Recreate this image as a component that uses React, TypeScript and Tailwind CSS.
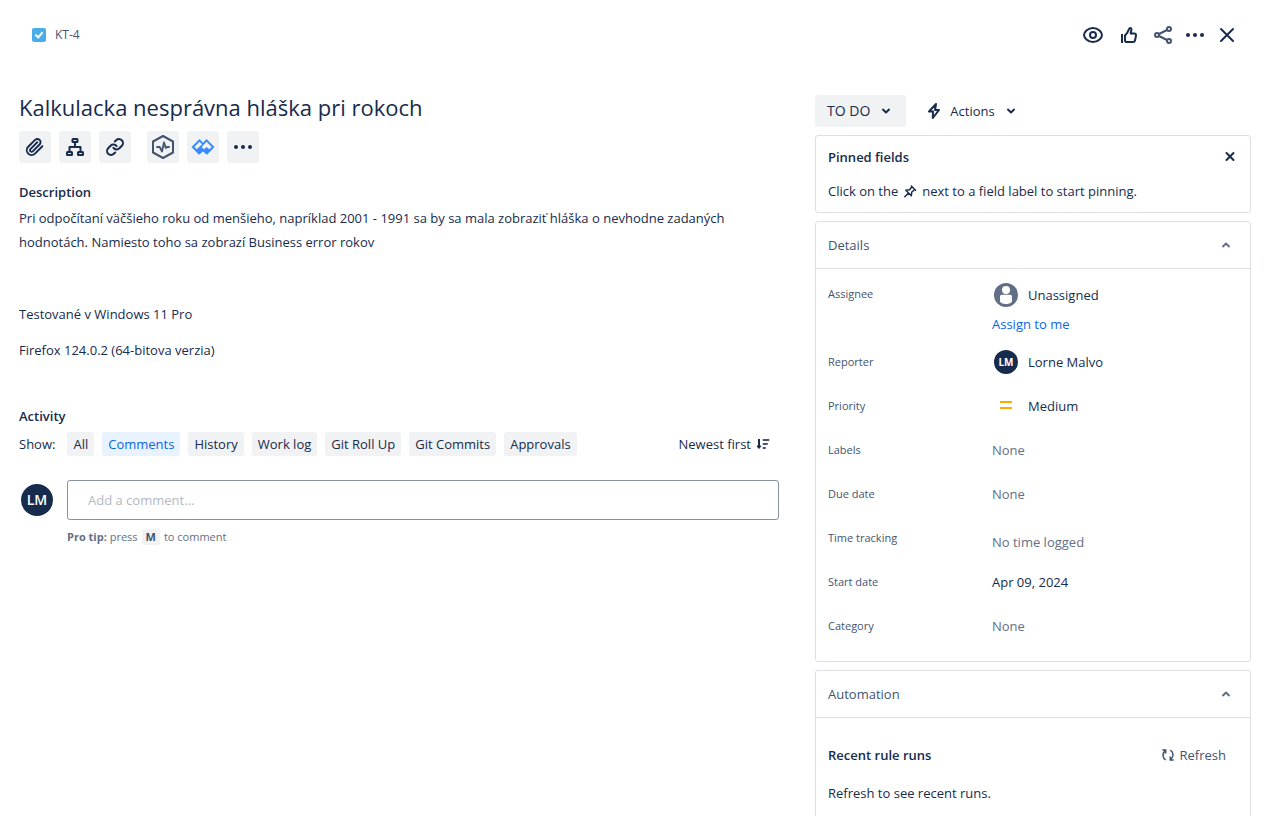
import type { ReactNode } from "react";

type IconProps = { children: ReactNode; size?: string; color?: string };

function Icon({ children, size = "size-6", color = "text-[#172b4d]" }: IconProps) {
  return (
    <svg
      viewBox="0 0 24 24"
      className={`${size} ${color} block shrink-0`}
      fill="none"
      stroke="currentColor"
      strokeWidth="2"
      strokeLinecap="round"
      strokeLinejoin="round"
      aria-hidden="true"
    >
      {children}
    </svg>
  );
}

const Dots = () => (
  <Icon>
    <g fill="currentColor" stroke="none">
      <circle cx="5" cy="12" r="2" />
      <circle cx="12" cy="12" r="2" />
      <circle cx="19" cy="12" r="2" />
    </g>
  </Icon>
);

const Chevron = ({ up = false }: { up?: boolean }) => (
  <Icon color={up ? "text-[#626f86]" : "text-[#172b4d]"}>
    <path d={up ? "M9 13.4l3-2.8 3 2.8" : "M9 10.6l3 2.8 3-2.8"} />
  </Icon>
);

function HeaderActions() {
  const wide = "flex h-8 w-8 items-center justify-center rounded-[3px]";
  const narrow = "flex h-8 w-7 items-center justify-center rounded-[3px]";
  return (
    <div className="flex items-center gap-1">
      <button className={wide} aria-label="Watch">
        <Icon>
          <path d="M12 5C6.600 5 3 9.600 3 12s3.600 7 9 7 9-4.600 9-7-3.600-7-9-7z" />
          <circle cx="12" cy="12" r="3" />
        </Icon>
      </button>
      <button className={wide} aria-label="Vote">
        <Icon>
          <path d="M5 11v9" strokeLinecap="butt" />
          <path d="M8 12.500v4.700c0 1.200.800 1.900 2 1.900h6c1 0 1.800-.6 2-1.600l1-4.900c.2-1.200-.5-2.100-1.700-2.100h-3.600l.7-3.800c.2-1-.4-1.700-1.200-1.600-.5 0-.9.400-1.100.9L10 10.200z" />
        </Icon>
      </button>
      <button className={narrow} aria-label="Share">
        <Icon color="text-[#44546f]">
          <circle cx="6" cy="12" r="2" />
          <circle cx="18" cy="6" r="2" />
          <circle cx="18" cy="18" r="2" />
          <path d="M8 11l8-4M8 13l8 4" />
        </Icon>
      </button>
      <button className={narrow} aria-label="More">
        <Dots />
      </button>
      <button className={narrow} aria-label="Close">
        <Icon>
          <path d="M6 6l12 12M18 6L6 18" />
        </Icon>
      </button>
    </div>
  );
}

function ToolButton({ label, children }: { label: string; children: ReactNode }) {
  return (
    <button aria-label={label} className="flex size-8 items-center justify-center rounded-[3px] bg-[#f1f2f4]">
      {children}
    </button>
  );
}

function Toolbar() {
  return (
    <div className="mt-2.5 flex gap-2">
      <ToolButton label="Attach">
        <Icon>
          <path
            d="M21.440 11.050l-9.190 9.190a6 6 0 0 1-8.490-8.490l8.570-8.570A4 4 0 1 1 18 8.840l-8.590 8.570a2 2 0 0 1-2.830-2.830l8.490-8.480"
            transform="translate(2.200 2.400) scale(.8)"
            strokeWidth="2.400"
          />
        </Icon>
      </ToolButton>
      <ToolButton label="Add a child issue">
        <Icon>
          <rect x="9.500" y="4" width="5" height="3" rx=".5" />
          <rect x="4" y="17" width="5" height="3" rx=".5" />
          <rect x="15" y="17" width="5" height="3" rx=".5" />
          <path d="M12 7v5M6.500 16v-4h11v4" />
        </Icon>
      </ToolButton>
      <ToolButton label="Link issue">
        <Icon>
          <g transform="translate(2.400 2.400) scale(.8)" strokeWidth="2.500">
            <path d="M10 13a5 5 0 0 0 7.540.540l3-3a5 5 0 0 0-7.070-7.070l-1.720 1.710" />
            <path d="M14 11a5 5 0 0 0-7.540-.540l-3 3a5 5 0 0 0 7.070 7.070l1.710-1.710" />
          </g>
        </Icon>
      </ToolButton>
      <div className="ml-2 flex gap-2">
        <ToolButton label="Monitoring">
          <Icon color="text-[#44546f]">
            <path d="M12 1l10 5.500v11L12 23 2 17.500v-11z" strokeWidth="2" />
            <path d="M6 12h2.700l2.300 4.500 2-9 1.800 5.500 1-1H18" strokeWidth="1.800" />
          </Icon>
        </ToolButton>
        <ToolButton label="Diagrams">
          <svg viewBox="0 0 24 24" className="block size-6" aria-hidden="true">
            <path d="M8.500 4l3.500 3.500L15.500 4l8 8-7.500 7.700-4-3.200-4 3.200L.5 12z" fill="#388bff" />
            <path d="M8.500 6.800L3.300 12l2.500 2.300L11 9.200zM15.500 6.800L10.600 12l2.400 2.300 2.600-2.400 2.800 2.300L20.700 12zM12 7.500l1-1-1-2.500-1 2.500z" fill="#f1f2f4" />
          </svg>
        </ToolButton>
        <ToolButton label="More actions">
          <Dots />
        </ToolButton>
      </div>
    </div>
  );
}

const filters = ["All", "Comments", "History", "Work log", "Git Roll Up", "Git Commits", "Approvals"];

function Activity() {
  return (
    <section className="mt-11">
      <h2 className="font-semibold">Activity</h2>
      <div className="mt-1.5 flex h-6 items-center justify-between">
        <div className="flex items-center gap-2">
          <span className="mr-1">Show:</span>
          {filters.map((name) => (
            <button
              key={name}
              className={`h-6 rounded-[3px] px-1.5 whitespace-nowrap ${
                name === "Comments" ? "bg-[#e9f2ff] text-[#0c66e4]" : "bg-[#f1f2f4]"
              }`}
            >
              {name}
            </button>
          ))}
        </div>
        <button className="mr-2 flex items-center gap-1 whitespace-nowrap">
          Newest first
          <svg viewBox="0 0 16 16" className="block size-4 text-[#172b4d]" fill="none" stroke="currentColor" aria-hidden="true">
            <path d="M4 3v9" strokeWidth="2" />
            <path d="M2 10l2 2.500L6 10z" fill="currentColor" strokeWidth="1" strokeLinejoin="round" />
            <path d="M8.500 4h5M8.500 8h3.500M8.500 12h1.500" stroke="#44546f" strokeWidth="2" strokeLinecap="round" />
          </svg>
        </button>
      </div>
      <div className="mt-6 flex">
        <span className="mt-1 ml-0.5 flex size-8 shrink-0 items-center justify-center rounded-full bg-[#172b4d] text-[14px] font-semibold text-white">
          LM
        </span>
        <div className="ml-3.5 flex-1">
          <input
            aria-label="Add a comment"
            placeholder="Add a comment…"
            className="block h-10 w-full rounded-[3px] border border-[#8590a2] px-5 placeholder:text-[#b3b9c4]"
          />
          <p className="mt-[9px] flex items-center gap-1 text-[11px] leading-4 text-[#626f86]">
            <span>
              <b>Pro tip:</b> press
            </span>
            <kbd className="rounded-[3px] bg-[#f1f2f4] px-1 font-[inherit] font-bold text-[#44546f]">M</kbd>
            <span>to comment</span>
          </p>
        </div>
      </div>
    </section>
  );
}

function Panel({ title, children }: { title: string; children: ReactNode }) {
  return (
    <section className="mt-2 rounded-[3px] border border-[#dcdfe4]">
      <button className="flex h-[47px] w-full items-center justify-between border-b border-[#dcdfe4] px-3 text-[#44546f]">
        <span>{title}</span>
        <Chevron up />
      </button>
      {children}
    </section>
  );
}

function Field({ label, children, muted = false }: { label: string; children: ReactNode; muted?: boolean }) {
  return (
    <div className="flex min-h-11 px-3">
      <dt className="w-[164px] shrink-0 pt-3.5 text-[11px] leading-4 text-[#44546f]">{label}</dt>
      <dd className={`flex-1 pt-3 ${muted ? "text-[#626f86]" : ""}`}>{children}</dd>
    </div>
  );
}

function WithIcon({ icon, children }: { icon: ReactNode; children: ReactNode }) {
  return (
    <div className="flex h-5 items-center gap-2.5 pl-0.5">
      <span className="flex size-6 shrink-0 items-center justify-center">{icon}</span>
      <span>{children}</span>
    </div>
  );
}

export default function App() {
  return (
    <div className="h-screen overflow-hidden bg-white font-['Open_Sans','Noto_Sans',sans-serif] text-[13px] leading-5 text-[#172b4d]">
      <header className="flex h-[70px] items-center justify-between pr-[27px] pl-[31px]">
        <a href="#KT-4" className="flex items-center gap-2 text-[12px] leading-4 text-[#44546f]">
          <svg viewBox="0 0 16 16" className="block size-4" aria-hidden="true">
            <rect x="1" y="1" width="14" height="14" rx="2" fill="#4bade8" />
            <path d="M5 8.300l2.200 2.200L11 5.800" fill="none" stroke="#fff" strokeWidth="2" strokeLinecap="round" strokeLinejoin="round" />
          </svg>
          KT-4
        </a>
        <HeaderActions />
      </header>

      <div className="flex items-start gap-9 pr-[17px] pl-[19px]">
        <main className="min-w-0 flex-1 pt-[23px]">
          <h1 className="text-[22px] leading-7">Kalkulacka nesprávna hláška pri rokoch</h1>
          <Toolbar />
          <section className="mt-[19px]">
            <h2 className="font-semibold">Description</h2>
            <div className="mt-1 space-y-3 leading-6">
              <p>
                Pri odpočítaní väčšieho roku od menšieho, napríklad 2001 - 1991 sa by sa mala zobraziť hláška o nevhodne
                zadaných
                <br />
                hodnotách. Namiesto toho sa zobrazí Business error rokov
              </p>
              <p className="h-6" />
              <p>Testované v Windows 11 Pro</p>
              <p>Firefox 124.0.2 (64-bitova verzia)</p>
            </div>
          </section>
          <Activity />
        </main>

        <aside className="w-[436px] shrink-0 pt-[25px]">
          <div className="flex h-8 items-center gap-4">
            <button className="flex h-8 items-center gap-1 rounded-[3px] bg-[#f1f2f4] pr-2 pl-3 text-[14px] font-medium">
              TO DO
              <Chevron />
            </button>
            <button className="flex h-8 items-center gap-1">
              <Icon>
                <path d="M14 5L7 12.500h4L10.800 19l6.200-8h-4z" />
              </Icon>
              Actions
              <Chevron />
            </button>
          </div>

          <section className="mt-2 rounded-[3px] border border-[#dcdfe4] px-3 pt-[11px] pb-[11px]">
            <div className="flex items-center justify-between">
              <h2 className="font-semibold">Pinned fields</h2>
              <button aria-label="Dismiss" className="-mr-1 flex h-5 items-center">
                <Icon>
                  <path d="M8.500 8l7 7M15.500 8l-7 7" />
                </Icon>
              </button>
            </div>
            <p className="mt-3.5 flex items-center gap-1">
              Click on the
              <svg viewBox="0 0 16 16" className="block size-4" fill="none" stroke="currentColor" strokeWidth="1.500" strokeLinecap="round" strokeLinejoin="round" aria-hidden="true">
                <path d="M9.300 3l4.200 4.200M10 3.700L7.500 6.700 3.800 7.200l5.500 5.500.5-3.700 3-2.500M6.300 10.200L2.800 13.700" />
              </svg>
              next to a field label to start pinning.
            </p>
          </section>

          <Panel title="Details">
            <dl className="pt-[3px] pb-[13px]">
              <div className="flex min-h-[68px] px-3">
                <dt className="w-[164px] shrink-0 pt-3.5 text-[11px] leading-4 text-[#44546f]">Assignee</dt>
                <dd className="flex-1 pt-[13px]">
                  <WithIcon
                    icon={
                      <svg viewBox="0 0 24 24" className="block size-6" aria-hidden="true">
                        <circle cx="12" cy="12" r="12" fill="#626f86" />
                        <circle cx="12" cy="7" r="4" fill="#fff" />
                        <path d="M6 13.500c0-1 .8-1.700 1.800-1.700h8.400c1 0 1.800.7 1.800 1.700V18c0 1.800-3 3-6 3s-6-1.200-6-3z" fill="#fff" />
                      </svg>
                    }
                  >
                    Unassigned
                  </WithIcon>
                  <button className="mt-[9px] block text-[#0c66e4]">Assign to me</button>
                </dd>
              </div>
              <Field label="Reporter">
                <WithIcon
                  icon={
                    <span className="flex size-6 items-center justify-center rounded-full bg-[#172b4d] text-[10px] font-bold text-white">
                      LM
                    </span>
                  }
                >
                  Lorne Malvo
                </WithIcon>
              </Field>
              <Field label="Priority">
                <WithIcon
                  icon={
                    <svg viewBox="0 0 16 16" className="block size-4" aria-hidden="true">
                      <path d="M2 3h12v2H2zM2 9h12v2H2z" fill="#ffab00" />
                    </svg>
                  }
                >
                  Medium
                </WithIcon>
              </Field>
              <Field label="Labels" muted>None</Field>
              <Field label="Due date" muted>None</Field>
              <Field label="Time tracking" muted>
                <span className="block pt-1">No time logged</span>
              </Field>
              <Field label="Start date">Apr 09, 2024</Field>
              <Field label="Category" muted>None</Field>
            </dl>
          </Panel>

          <Panel title="Automation">
            <div className="px-3 pt-[27px] pb-6">
              <div className="flex items-center justify-between pr-3">
                <h2 className="font-semibold">Recent rule runs</h2>
                <button className="flex items-center gap-1 text-[#44546f]">
                  <svg viewBox="0 0 16 16" className="block size-4" fill="none" stroke="currentColor" strokeWidth="1.500" aria-hidden="true">
                    <path d="M5.700 12.800C2.500 11 2 6.500 5.200 3.600M2.300 3h3.400v3.400M10.300 3.200c3.200 1.800 3.700 6.300.5 9.200M13.700 13h-3.400V9.600" />
                  </svg>
                  Refresh
                </button>
              </div>
              <p className="mt-[18px]">Refresh to see recent runs.</p>
            </div>
          </Panel>
        </aside>
      </div>
    </div>
  );
}
